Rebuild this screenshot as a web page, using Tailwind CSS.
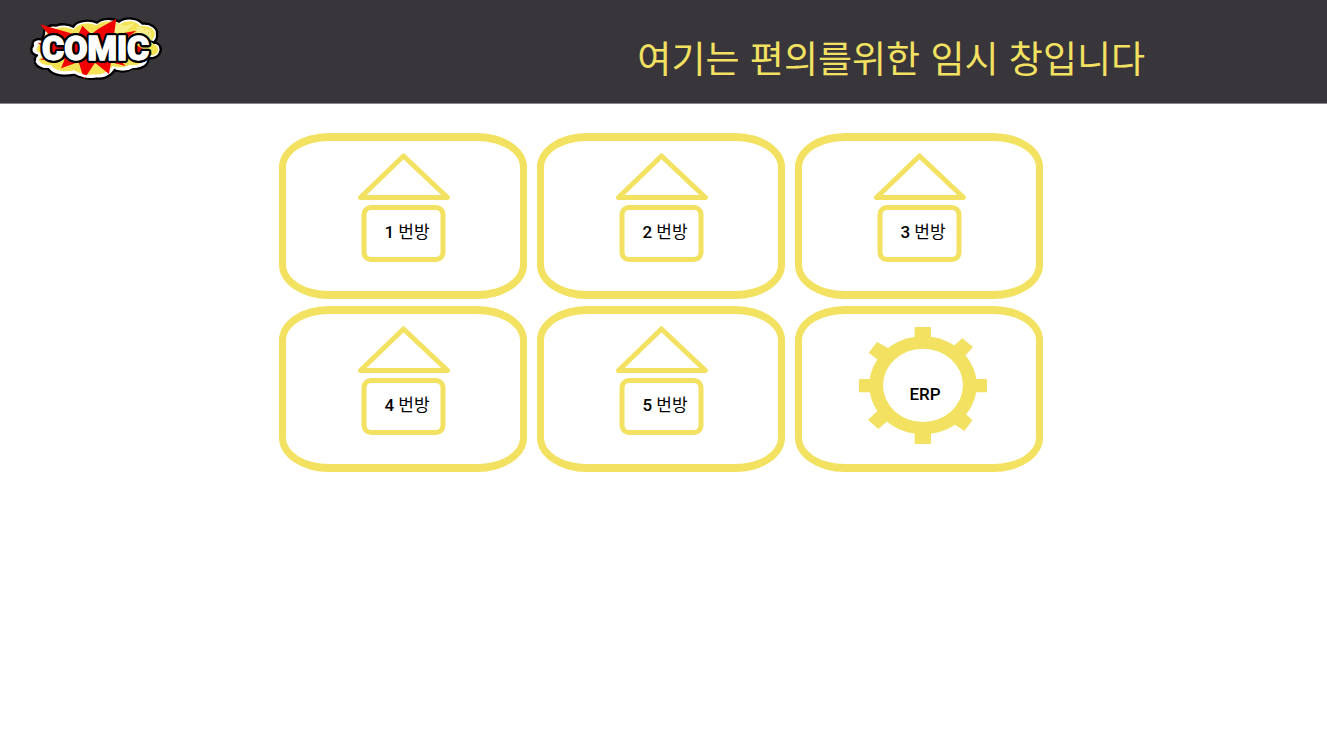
<!DOCTYPE html>
<html lang="ko">
<head>
<meta charset="utf-8">
<meta name="viewport" content="width=device-width, initial-scale=1">
<title>COMIC</title>
<script src="https://cdn.jsdelivr.net/npm/@tailwindcss/browser@4"></script>
</head>
<body class="min-h-screen bg-white font-['Roboto','Noto_Sans_CJK_KR',sans-serif] text-black">
<svg class="hidden" aria-hidden="true">
  <symbol id="house" viewBox="0 0 248 166">
    <g fill="none" stroke="#f3e161" stroke-width="5" stroke-linejoin="round">
      <path d="M81.5 64.5 124.5 23 168.5 64.5Z"/>
      <rect x="85" y="74.5" width="79" height="52" rx="7"/>
    </g>
  </symbol>
</svg>
<header class="flex items-start justify-between border-b border-[#8a8a8c] bg-[#38363b] pr-[182px] pl-5">
  <a href="#" aria-label="COMIC" class="block pt-2 pb-[15px]">
    <svg class="h-20 w-[150px]" viewBox="0 0 450 240">
      <path d="M72 78C70 60 88 48 108 53C122 47 145 47 160 56C168 40 205 32 231 44C248 28 280 30 297 41C318 25 355 30 367 47C392 44 414 60 411 78C413 88 408 98 401 104C420 104 428 124 418 138C412 149 396 152 386 150C386 174 362 186 338 181C322 193 296 193 285 185C272 207 246 215 228 211C208 216 174 207 162 199C145 205 96 207 84 181C66 184 44 176 45 158C42 152 46 146 51 142C32 139 30 121 39 113C33 98 50 90 66 95C68 88 70 84 72 78Z" fill="#fff" stroke="#000" stroke-width="7" stroke-linejoin="round"/>
      <path d="M80 77C80 64 95 57 108 62C124 55 145 56 160 65C177 45 204 41 228 52C254 34 278 38 297 50C322 33 350 38 361 55C386 51 405 64 404 77C403 91 394 98 388 104C416 107 421 128 408 138C399 145 382 143 377 141C378 165 350 175 330 171C310 181 286 178 278 174C263 194 238 203 224 199C200 203 174 196 163 187C136 193 104 190 93 171C72 174 55 164 57 151L84 143C56 134 40 128 56 113C52 104 68 101 83 106Z" fill="#f4e455"/>
      <path d="M262 57 287 42 314 53 345 45 320 70 275 78ZM350 55 390 66 397 87 378 101 350 76Z" fill="#f9ef88"/>
      <g fill="#f2c83a">
        <circle cx="112" cy="70" r="2"/><circle cx="124" cy="65" r="2"/><circle cx="137" cy="71" r="2"/><circle cx="150" cy="66" r="2"/><circle cx="205" cy="58" r="2"/><circle cx="217" cy="63" r="2"/><circle cx="231" cy="60" r="2"/><circle cx="373" cy="65" r="2"/><circle cx="386" cy="74" r="2"/><circle cx="395" cy="83" r="2"/><circle cx="383" cy="91" r="2"/><circle cx="398" cy="118" r="2"/><circle cx="402" cy="129" r="2"/><circle cx="115" cy="176" r="2"/><circle cx="130" cy="181" r="2"/><circle cx="145" cy="178" r="2"/><circle cx="320" cy="166" r="2"/><circle cx="340" cy="162" r="2"/>
      </g>
      <path d="M60 49 142 73 174 82 187 53 214 79 235 62 289 32 282 80 349 68 320 90 360 118 398 139 350 136 294 151 317 174 273 163 267 198 225 164 192 214 176 162 123 181 134 154 60 155 95 137 53 104 90 108 90 84Z" fill="#f00000"/>
      <path d="M49 158C58 173 71 179 88 176C107 198 138 196 164 193C192 207 218 209 237 202M287 181C309 187 326 184 339 176C359 178 379 162 380 147" fill="none" stroke="#fff" stroke-width="7"/>
      <path d="M375 105C382 99 394 98 402 104" fill="none" stroke="#000" stroke-width="6" stroke-linecap="round"/>
      <text x="227" y="157" text-anchor="middle" font-family="Roboto" font-weight="900" font-size="101" fill="#fff" stroke="#000" stroke-width="18" stroke-linejoin="round" paint-order="stroke">COMIC</text>
      <text x="227" y="157" text-anchor="middle" font-family="Roboto" font-weight="900" font-size="101" fill="#fff" stroke="#fff" stroke-width="4" aria-hidden="true">COMIC</text>
    </svg>
  </a>
  <h1 class="pt-[29px] font-['Noto_Sans_CJK_KR',sans-serif] text-[37px] leading-[56px] font-normal text-[#f3e161]">여기는 편의를위한 임시 창입니다</h1>
</header>
<main class="mx-auto grid max-w-[769px] grid-cols-[repeat(auto-fill,248px)] gap-x-[10px] gap-y-[7px] pt-[29px]">
  <button type="button" class="relative h-[166px] rounded-[50px/34px] border-x-[7px] border-y-[8px] border-[#f3e161] pt-[34px] pl-2 text-[17px] font-medium">
    <svg class="absolute -top-2 -left-[7px] h-[166px] w-[248px]"><use href="#house"/></svg><span class="relative">1 <span class="font-normal">번방</span></span>
  </button>
  <button type="button" class="relative h-[166px] rounded-[50px/34px] border-x-[7px] border-y-[8px] border-[#f3e161] pt-[34px] pl-2 text-[17px] font-medium">
    <svg class="absolute -top-2 -left-[7px] h-[166px] w-[248px]"><use href="#house"/></svg><span class="relative">2 <span class="font-normal">번방</span></span>
  </button>
  <button type="button" class="relative h-[166px] rounded-[50px/34px] border-x-[7px] border-y-[8px] border-[#f3e161] pt-[34px] pl-2 text-[17px] font-medium">
    <svg class="absolute -top-2 -left-[7px] h-[166px] w-[248px]"><use href="#house"/></svg><span class="relative">3 <span class="font-normal">번방</span></span>
  </button>
  <button type="button" class="relative h-[166px] rounded-[50px/34px] border-x-[7px] border-y-[8px] border-[#f3e161] pt-[34px] pl-2 text-[17px] font-medium">
    <svg class="absolute -top-2 -left-[7px] h-[166px] w-[248px]"><use href="#house"/></svg><span class="relative">4 <span class="font-normal">번방</span></span>
  </button>
  <button type="button" class="relative h-[166px] rounded-[50px/34px] border-x-[7px] border-y-[8px] border-[#f3e161] pt-[34px] pl-2 text-[17px] font-medium">
    <svg class="absolute -top-2 -left-[7px] h-[166px] w-[248px]"><use href="#house"/></svg><span class="relative">5 <span class="font-normal">번방</span></span>
  </button>
  <button type="button" class="relative h-[166px] rounded-[50px/34px] border-x-[7px] border-y-[8px] border-[#f3e161] pt-3 pl-3 text-[17px] font-medium">
    <svg class="absolute -top-2 -left-[7px] h-[166px] w-[248px]" viewBox="0 0 744 498" fill="#f3e161">
      <rect x="359" y="63" width="49" height="351" rx="4"/>
      <rect x="192" y="219" width="384" height="40" rx="2"/>
      <path d="M221 140 246 108 300 138 260 170ZM502 97 534 123 490 172 456 138ZM532 343 508 375 450 335 500 312ZM219 341 250 369 300 325 255 308Z"/>
      <ellipse cx="384" cy="238" rx="161" ry="147"/>
      <ellipse cx="384" cy="238" rx="120" ry="110" fill="#fff"/>
    </svg><span class="relative">ERP</span>
  </button>
</main>
</body>
</html>
